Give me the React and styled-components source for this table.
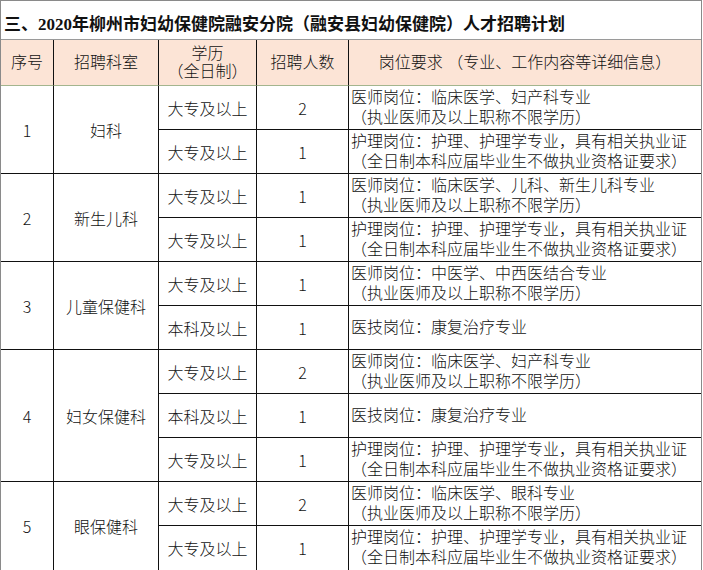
import React from 'react';
import styled, { createGlobalStyle } from 'styled-components';

const GlobalStyle = createGlobalStyle`
  html, body {
    margin: 0;
    padding: 0;
    background: #fff;
  }
  body {
    font-family: "Liberation Sans", "Noto Sans CJK SC", sans-serif;
    color: #111;
  }
`;

const nurse = [
  '大专及以上',
  '1',
  ['护理岗位：护理、护理学专业，具有相关执业证', '（全日制本科应届毕业生不做执业资格证要求）'],
];

const licence = '（执业医师及以上职称不限学历）';

const groups = [
  {
    no: '1',
    dept: '妇科',
    rows: [['大专及以上', '2', ['医师岗位：临床医学、妇产科专业', licence]], nurse],
  },
  {
    no: '2',
    dept: '新生儿科',
    rows: [['大专及以上', '1', ['医师岗位：临床医学、儿科、新生儿科专业', licence]], nurse],
  },
  {
    no: '3',
    dept: '儿童保健科',
    rows: [
      ['大专及以上', '1', ['医师岗位：中医学、中西医结合专业', licence]],
      ['本科及以上', '1', ['医技岗位：康复治疗专业']],
    ],
  },
  {
    no: '4',
    dept: '妇女保健科',
    rows: [
      ['大专及以上', '2', ['医师岗位：临床医学、妇产科专业', licence]],
      ['本科及以上', '1', ['医技岗位：康复治疗专业']],
      nurse,
    ],
  },
  {
    no: '5',
    dept: '眼保健科',
    rows: [['大专及以上', '2', ['医师岗位：临床医学、眼科专业', licence]], nurse],
  },
];

const App = () => (
  <>
    <GlobalStyle />
    <Frame>
      <Sheet>
        <colgroup>
          <col style={{ width: 53 }} />
          <col style={{ width: 105 }} />
          <col style={{ width: 98 }} />
          <col style={{ width: 92 }} />
          <col style={{ width: 352 }} />
        </colgroup>
        <tbody>
          <tr>
            <TitleCell colSpan={5}>
              三、2020年柳州市妇幼保健院融安分院（融安县妇幼保健院）人才招聘计划
            </TitleCell>
          </tr>
          <tr>
            <HeadCell>序号</HeadCell>
            <HeadCell>招聘科室</HeadCell>
            <HeadCell>
              <Line>学历</Line>
              <Line>（全日制）</Line>
            </HeadCell>
            <HeadCell>招聘人数</HeadCell>
            <HeadCell $end>岗位要求 （专业、工作内容等详细信息）</HeadCell>
          </tr>
          {groups.map((g, gi) => {
            const lastGroup = gi === groups.length - 1;
            return g.rows.map(([edu, count, desc], ri) => {
              const lastRow = lastGroup && ri === g.rows.length - 1;
              return (
                <Row key={`${g.no}-${ri}`}>
                  {ri === 0 && (
                    <>
                      <Cell rowSpan={g.rows.length} $last={lastGroup} $num>
                        {g.no}
                      </Cell>
                      <Cell rowSpan={g.rows.length} $last={lastGroup}>
                        {g.dept}
                      </Cell>
                    </>
                  )}
                  <Cell $last={lastRow}>{edu}</Cell>
                  <Cell $last={lastRow} $num>
                    {count}
                  </Cell>
                  <DescCell $last={lastRow}>
                    {desc.map((line) => (
                      <Line key={line}>{line}</Line>
                    ))}
                  </DescCell>
                </Row>
              );
            });
          })}
        </tbody>
      </Sheet>
    </Frame>
  </>
);

export default App;

const Frame = styled.div`
  width: 700px;
  border: 1px solid #8a8a8a;
  background: #fff;
`;

const Sheet = styled.table`
  width: 700px;
  border-collapse: separate;
  border-spacing: 0;
  table-layout: fixed;
`;

const TitleCell = styled.td`
  box-sizing: border-box;
  height: 39px;
  padding: 5px 0 0 3px;
  border-bottom: 1px solid #9a9a9a;
  font-family: "Liberation Serif", "Noto Sans CJK SC", serif;
  font-size: 17px;
  font-weight: bold;
  color: #111;
  white-space: nowrap;
  vertical-align: middle;
`;

const HeadCell = styled.td`
  box-sizing: border-box;
  height: 46px;
  padding: 0;
  background: #fce4d6;
  border-right: ${(p) => (p.$end ? 'none' : '1px solid #111')};
  border-bottom: 1px solid #a3b58e;
  font-size: 16px;
  font-weight: 300;
  line-height: 18px;
  text-align: center;
  vertical-align: middle;
  white-space: nowrap;
`;

const Row = styled.tr`
  height: 44px;
`;

const Cell = styled.td`
  box-sizing: border-box;
  height: 44px;
  padding: 0;
  border-right: 1px solid #111;
  border-bottom: ${(p) => (p.$last ? 'none' : '1px solid #111')};
  font-family: ${(p) =>
    p.$num
      ? '"Noto Sans CJK SC", "Liberation Sans", sans-serif'
      : '"Liberation Sans", "Noto Sans CJK SC", sans-serif'};
  font-size: 16px;
  font-weight: 300;
  text-align: center;
  vertical-align: middle;
  white-space: nowrap;
`;

const DescCell = styled.td`
  box-sizing: border-box;
  height: 44px;
  padding: 0 0 0 2px;
  border-bottom: ${(p) => (p.$last ? 'none' : '1px solid #111')};
  font-size: 16px;
  font-weight: 300;
  line-height: 20px;
  text-align: left;
  vertical-align: middle;
  white-space: nowrap;
`;

const Line = styled.div`
  display: block;
`;
